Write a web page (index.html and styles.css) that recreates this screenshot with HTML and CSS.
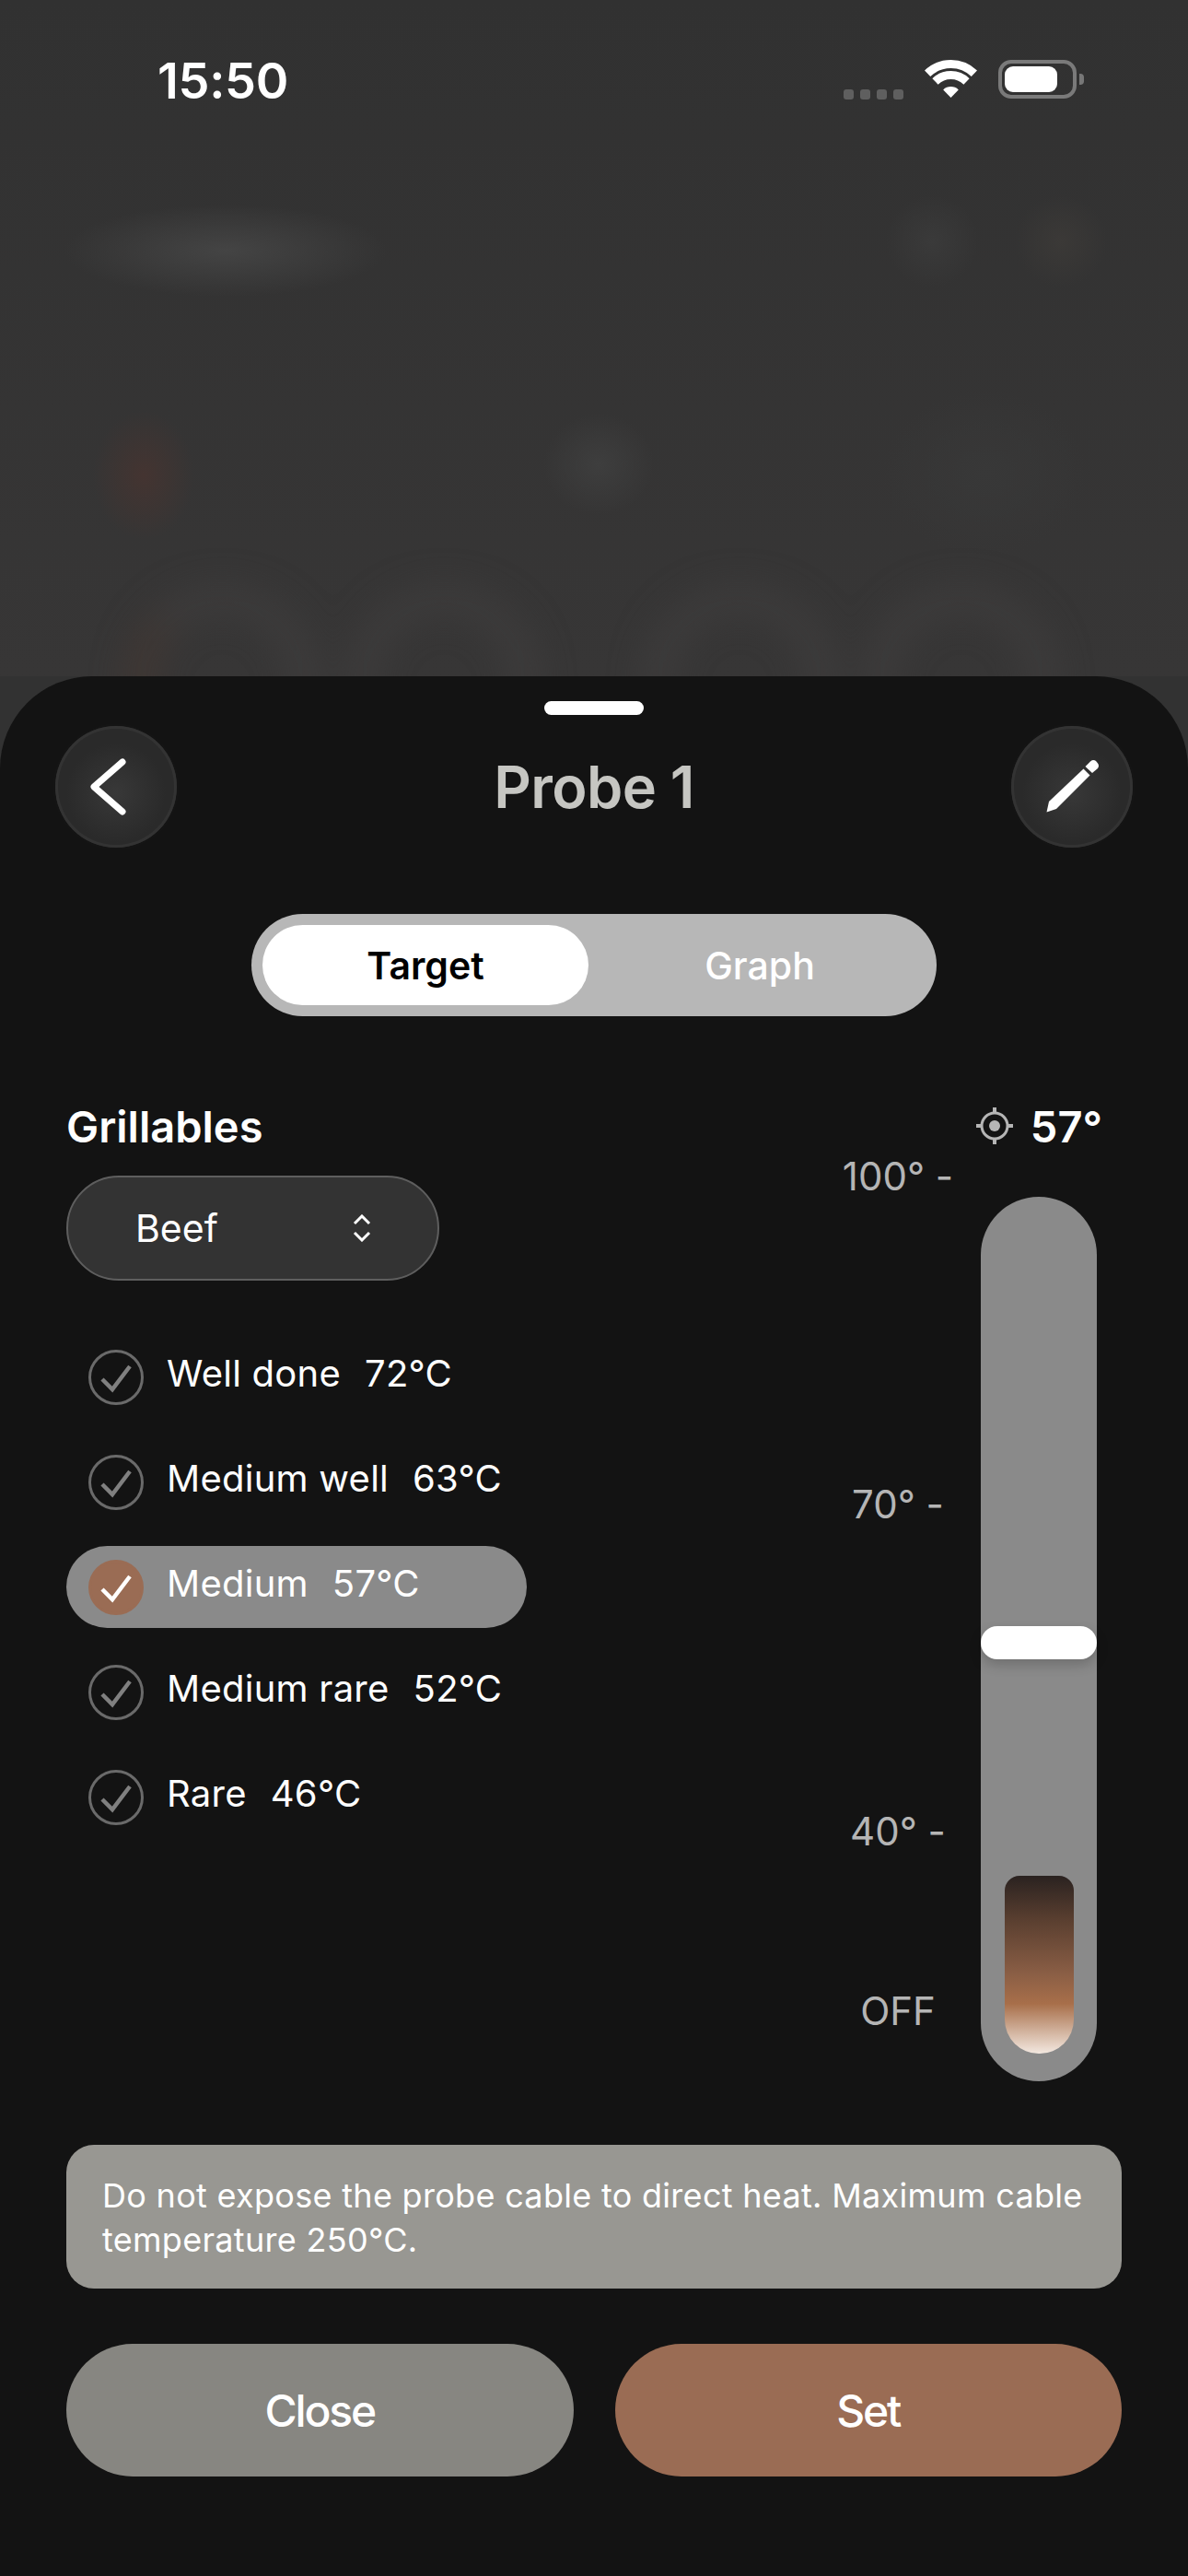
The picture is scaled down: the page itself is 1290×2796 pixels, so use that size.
FILE: index.html
```html
<!DOCTYPE html>
<html lang="en">
<head>
    <meta charset="UTF-8">
    <meta name="viewport" content="width=device-width, initial-scale=1.0">
    <title>Probe 1</title>
    <link rel="stylesheet" href="styles.css">
</head>
<body>
    <div class="screen">
        <div class="backdrop">
            <div class="status-bar">
                <span class="time">15:50</span>
                <div class="status-icons">
                    <div class="signal"><i></i><i></i><i></i><i></i></div>
                    <svg class="wifi" viewBox="0 0 57 42">
                        <path d="M3.1 14.8A36.5 36.5 0 0 1 53.9 14.8" fill="none" stroke="#fff" stroke-width="9"/>
                        <path d="M11.5 23.4A24.5 24.5 0 0 1 45.5 23.4" fill="none" stroke="#fff" stroke-width="9"/>
                        <path d="M28.5 41L20.2 32.4A12 12 0 0 1 36.8 32.4Z" fill="#fff"/>
                    </svg>
                    <div class="battery"><div class="battery-level"></div></div>
                    <div class="battery-nub"></div>
                </div>
            </div>
            <div class="blurred-gauges">
                <div class="ring warm"></div>
                <div class="ring"></div>
                <div class="ring second-pair"></div>
                <div class="ring"></div>
            </div>
        </div>

        <div class="sheet">
            <div class="handle"></div>

            <header class="header">
                <button class="round-button">
                    <svg viewBox="0 0 132 132">
                        <path d="M73 39L42 66L73 93" fill="none" stroke="#fff" stroke-width="7" stroke-linecap="round" stroke-linejoin="round"/>
                    </svg>
                </button>
                <h1>Probe 1</h1>
                <button class="round-button">
                    <svg viewBox="0 0 132 132">
                        <path d="M38.5 93.5L41 82L78.5 46.5L85.5 53.5L49 90Z" fill="#fff"/>
                        <path d="M80.5 44L86 38.5Q89 36 92 38L94 40.5Q96 43 94 46L88 51Z" fill="#fff"/>
                    </svg>
                </button>
            </header>

            <div class="tabs">
                <button class="tab active">Target</button>
                <button class="tab">Graph</button>
            </div>

            <div class="main">
                <div class="grillables">
                    <h2>Grillables</h2>
                    <div class="select">
                        <span>Beef</span>
                        <svg class="select-arrows" viewBox="0 0 20 30">
                            <path d="M2 10L10 2L18 10M2 20L10 28L18 20" fill="none" stroke="#fff" stroke-width="3"/>
                        </svg>
                    </div>
                    <div class="doneness-list">
                        <div class="doneness">
                            <svg class="check" viewBox="0 0 60 60"><circle cx="30" cy="30" r="28.5"/><path d="M15 32L26 43L45 18"/></svg>
                            <div class="doneness-text"><span>Well done</span><span>72°C</span></div>
                        </div>
                        <div class="doneness">
                            <svg class="check" viewBox="0 0 60 60"><circle cx="30" cy="30" r="28.5"/><path d="M15 32L26 43L45 18"/></svg>
                            <div class="doneness-text"><span>Medium well</span><span>63°C</span></div>
                        </div>
                        <div class="doneness selected">
                            <svg class="check" viewBox="0 0 60 60"><circle cx="30" cy="30" r="28.5"/><path d="M15 32L26 43L45 18"/></svg>
                            <div class="doneness-text"><span>Medium</span><span>57°C</span></div>
                        </div>
                        <div class="doneness">
                            <svg class="check" viewBox="0 0 60 60"><circle cx="30" cy="30" r="28.5"/><path d="M15 32L26 43L45 18"/></svg>
                            <div class="doneness-text"><span>Medium rare</span><span>52°C</span></div>
                        </div>
                        <div class="doneness">
                            <svg class="check" viewBox="0 0 60 60"><circle cx="30" cy="30" r="28.5"/><path d="M15 32L26 43L45 18"/></svg>
                            <div class="doneness-text"><span>Rare</span><span>46°C</span></div>
                        </div>
                    </div>
                </div>

                <div class="gauge">
                    <div class="gauge-head">
                        <svg class="target-icon" viewBox="0 0 40 40">
                            <circle cx="20" cy="20" r="14" fill="none" stroke="#b5b5b5" stroke-width="3"/>
                            <ellipse cx="20" cy="20" rx="6" ry="6" fill="#b5b5b5"/>
                            <path d="M20 0V6M20 34V40M0 20H6M34 20H40" stroke="#b5b5b5" stroke-width="4"/>
                        </svg>
                        <span class="target-value">57°</span>
                    </div>
                    <div class="gauge-body">
                        <div class="scale">
                            <span class="scale-top">100° -</span>
                            <span class="scale-mid">70° -</span>
                            <span class="scale-low">40° -</span>
                            <span class="scale-off">OFF</span>
                        </div>
                        <div class="track">
                            <div class="thumb"></div>
                            <div class="fill"></div>
                        </div>
                    </div>
                </div>
            </div>

            <div class="note">Do not expose the probe cable to direct heat. Maximum cable temperature 250°C.</div>

            <div class="actions">
                <button class="action close">Close</button>
                <button class="action set">Set</button>
            </div>
        </div>
    </div>
</body>
</html>
```

FILE: styles.css
```css
* {
    margin: 0;
    padding: 0;
    box-sizing: border-box;
    font-family: Inter, Roboto, sans-serif;
}

:root {
    --sheet: #131313;
    --text: #FFFFFF;
    --muted: #B5B5B5;
    --grey: #8A8A8A;
    --copper: #9A6C54;
}

body {
    background: #323232;
    color: var(--text);
}

button {
    border: none;
    background: transparent;
    color: inherit;
}

.screen {
    width: 1290px;
    height: 2796px;
    display: flex;
    flex-direction: column;
    overflow: hidden;
}

/* blurred page behind the sheet */
.backdrop {
    height: 734px;
    flex-shrink: 0;
    overflow: hidden;
    background:
        radial-gradient(ellipse 175px 50px at 245px 272px, #444, transparent),
        radial-gradient(ellipse 50px 50px at 1012px 262px, #3a3a3a, transparent),
        radial-gradient(ellipse 50px 50px at 1152px 262px, #3b3937, transparent),
        radial-gradient(ellipse 55px 70px at 156px 516px, #443431, transparent),
        radial-gradient(ellipse 60px 55px at 650px 504px, #3e3e3e, transparent),
        radial-gradient(ellipse 110px 90px at 1070px 514px, #383838, transparent),
        linear-gradient(#313131, #373636);
}

.status-bar {
    height: 128px;
    padding: 61px 113px 0 171px;
    display: flex;
    justify-content: space-between;
}

.time {
    font-size: 54px;
    line-height: 54px;
    font-weight: 600;
    letter-spacing: -0.3px;
}

.status-icons {
    display: flex;
    height: 42px;
    margin-top: 4px;
    align-items: center;
}

.signal {
    display: flex;
    gap: 7px;
    margin-top: 32px;
    margin-right: 23px;
}

.signal i {
    width: 11px;
    height: 11px;
    border-radius: 3px;
    background: #5F5F5F;
}

.wifi {
    width: 57px;
    height: 42px;
    margin-right: 23px;
}

.battery {
    width: 85px;
    height: 42px;
    padding: 3px;
    border: 4px solid #7A7A7A;
    border-radius: 14px;
}

.battery-level {
    width: 57px;
    height: 28px;
    background: #fff;
    border-radius: 9px;
}

.battery-nub {
    width: 5px;
    height: 12px;
    margin-left: 3px;
    background: #777;
    border-radius: 0 4px 4px 0;
}

.blurred-gauges {
    display: flex;
    gap: 45px;
    padding-left: 143px;
    margin-top: 514px;
    filter: blur(20px);
}

.ring {
    width: 196px;
    height: 196px;
    flex-shrink: 0;
    border: 16px solid #444242;
    border-radius: 50%;
}

.ring.warm {
    border-left-color: #4a3932;
}

.ring.second-pair {
    margin-left: 80px;
}

/* bottom sheet */
.sheet {
    flex: 1;
    display: flex;
    flex-direction: column;
    padding-top: 27px;
    background: var(--sheet);
    border-radius: 100px 100px 0 0;
}

.handle {
    width: 108px;
    height: 15px;
    align-self: center;
    background: #fff;
    border-radius: 8px;
}

.header {
    display: flex;
    align-items: center;
    justify-content: space-between;
    padding: 0 60px;
    margin-top: 12px;
}

.header h1 {
    font-size: 63px;
    font-weight: 600;
    letter-spacing: -0.6px;
    color: #C6C6C2;
}

.round-button {
    width: 132px;
    height: 132px;
    border-radius: 50%;
    background: radial-gradient(circle at 50% 55%, #383838, #2A2A2A 55%);
    box-shadow: inset 0 0 0 3px #333, 0 0 30px rgba(255, 255, 255, 0.02);
}

.round-button svg {
    display: block;
    width: 132px;
    height: 132px;
}

.tabs {
    width: 744px;
    height: 111px;
    align-self: center;
    display: flex;
    padding: 12px;
    margin-top: 72px;
    background: #B7B7B7;
    border-radius: 56px;
}

.tab {
    flex: 1;
    padding-left: 6px;
    font-size: 41px;
    font-weight: 500;
    border-radius: 44px;
}

.tab.active {
    flex: 0 0 354px;
    padding-left: 0;
    font-weight: 600;
    background: #fff;
    color: #000;
}

.main {
    display: flex;
    justify-content: space-between;
    padding: 0 99px 0 72px;
    margin-top: 97px;
}

.grillables h2 {
    font-size: 47px;
    line-height: 46px;
    font-weight: 600;
}

.select {
    width: 405px;
    height: 114px;
    margin-top: 30px;
    padding: 0 72px 0 73px;
    display: flex;
    align-items: center;
    justify-content: space-between;
    font-size: 41px;
    background: #333;
    border: 2px solid #5E5E5E;
    border-radius: 57px;
}

.select-arrows {
    width: 20px;
    height: 30px;
}

.doneness-list {
    display: flex;
    flex-direction: column;
    gap: 25px;
    margin-top: 60px;
}

.doneness {
    width: 500px;
    height: 89px;
    display: flex;
    align-items: center;
    gap: 25px;
    padding-left: 24px;
    border-radius: 45px;
}

.doneness.selected {
    background: var(--grey);
}

.check {
    width: 60px;
    height: 60px;
    flex-shrink: 0;
    fill: none;
    stroke: #6A6A6A;
}

.check circle {
    stroke-width: 3;
}

.check path {
    stroke: #808080;
    stroke-width: 4.5;
}

.doneness.selected .check {
    fill: var(--copper);
    stroke: var(--copper);
}

.doneness.selected .check path {
    fill: none;
    stroke: #fff;
}

.doneness-text {
    display: flex;
    gap: 26px;
    padding-bottom: 8px;
    font-size: 40px;
    letter-spacing: 0.25px;
}

.gauge {
    display: flex;
    flex-direction: column;
    align-items: flex-end;
}

.gauge-head {
    height: 44px;
    margin-right: -6px;
    display: flex;
    align-items: center;
    gap: 19px;
}

.target-icon {
    width: 40px;
    height: 40px;
}

.target-value {
    font-size: 47px;
    font-weight: 600;
}

.gauge-body {
    display: flex;
    gap: 30px;
    margin-top: 8px;
}

.scale {
    width: 120px;
    display: flex;
    flex-direction: column;
    align-items: center;
    font-size: 42px;
    line-height: 48px;
    white-space: nowrap;
    color: var(--muted);
}

.scale-top {
    margin-top: 1px;
}

.scale-mid {
    margin-top: 308px;
}

.scale-low {
    margin-top: 307px;
}

.scale-off {
    margin-top: 147px;
}

.track {
    position: relative;
    width: 126px;
    height: 960px;
    margin-top: 47px;
    padding-bottom: 30px;
    display: flex;
    flex-direction: column;
    justify-content: flex-end;
    align-items: center;
    background: var(--grey);
    border-radius: 63px;
}

.thumb {
    position: absolute;
    top: 466px;
    left: 0;
    width: 126px;
    height: 36px;
    background: #fff;
    border-radius: 18px;
    box-shadow: 0 6px 14px rgba(0, 0, 0, 0.2);
}

.fill {
    width: 75px;
    height: 193px;
    border-radius: 16px 16px 37px 37px;
    background: linear-gradient(#2A2220, #5A3F30 25%, #8A5E45 55%, #A86F4A 72%, #F3E8E0 100%);
}

.note {
    margin: 69px 72px 0;
    height: 156px;
    padding: 31px 39px 0;
    font-size: 36px;
    line-height: 48px;
    letter-spacing: 0.3px;
    background: #989792;
    border-radius: 30px;
}

.actions {
    display: flex;
    gap: 45px;
    margin: 60px 72px 0;
}

.action {
    flex: 1;
    height: 144px;
    font-size: 48px;
    font-weight: 500;
    letter-spacing: -2.2px;
    border-radius: 72px;
}

.action.close {
    background: #878681;
}

.action.set {
    background: var(--copper);
}
```
